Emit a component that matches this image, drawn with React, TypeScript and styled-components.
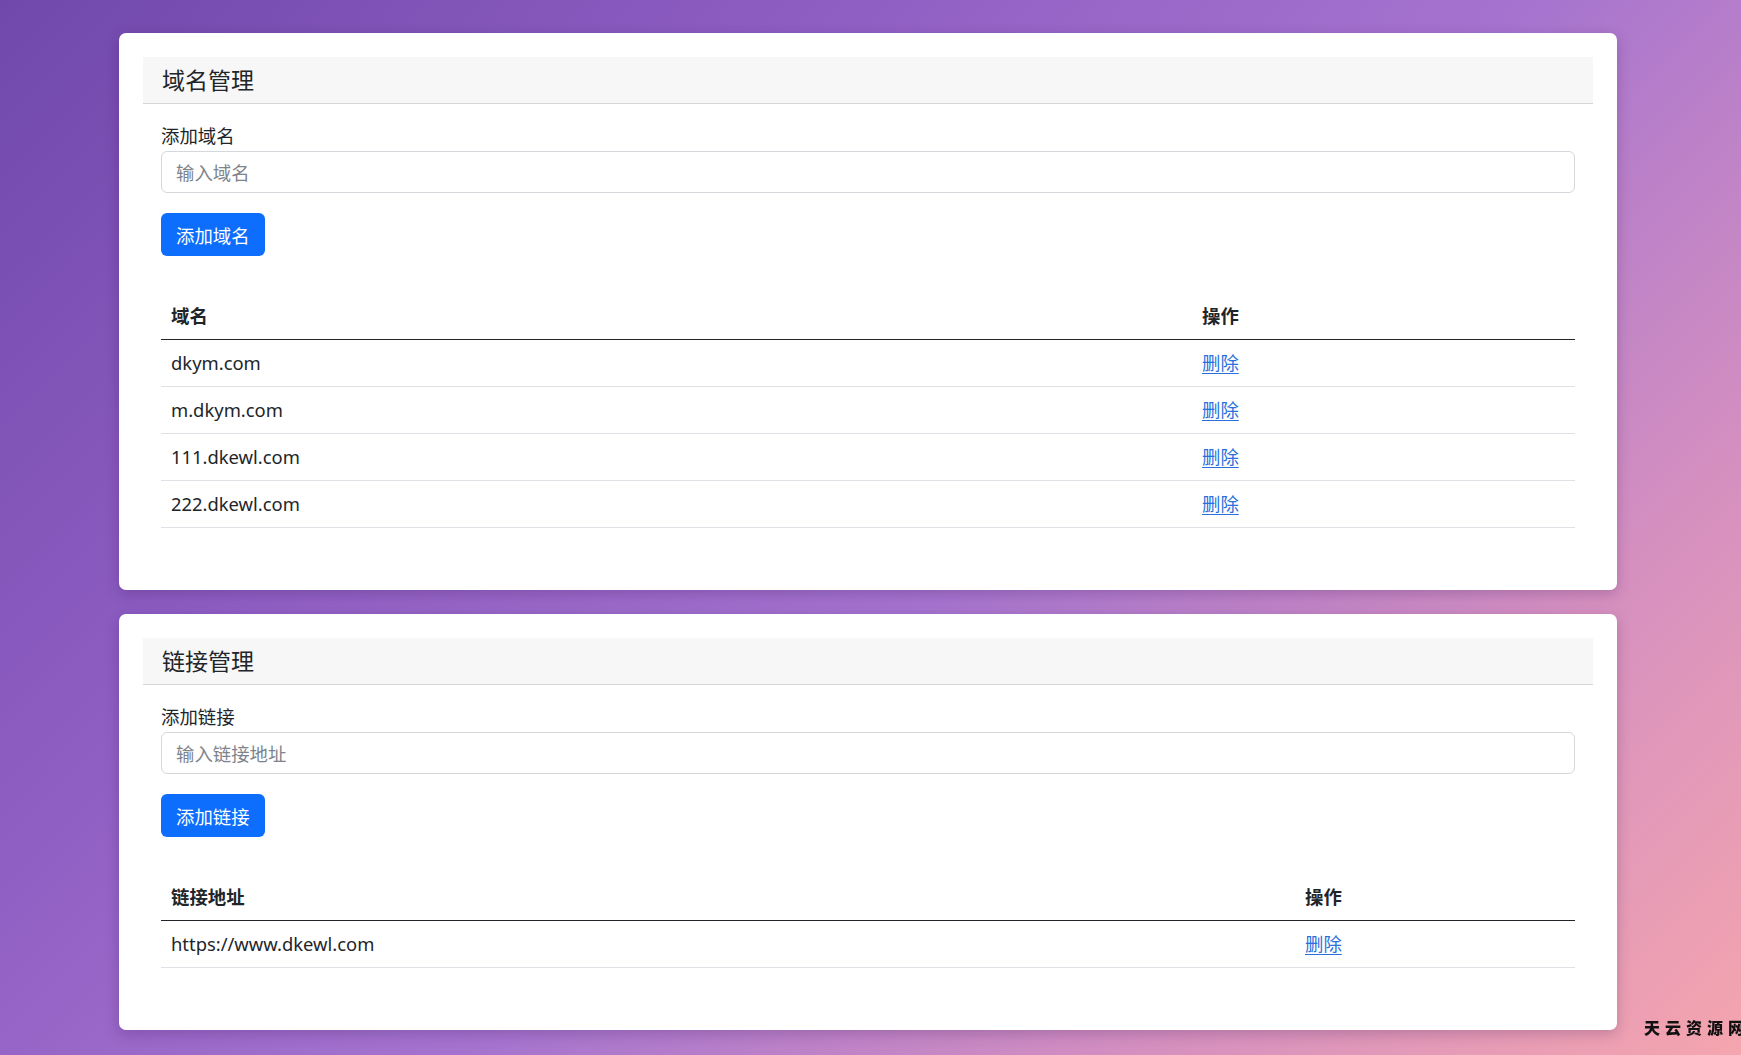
import React from "react";
import styled, { createGlobalStyle } from "styled-components";

const GlobalStyle = createGlobalStyle`
  html, body {
    margin: 0;
    padding: 0;
  }
  body {
    min-height: 100vh;
    font-family: "Noto Sans", "Noto Sans CJK SC", sans-serif;
    font-size: 18.4px;
    color: #212529;
    background: linear-gradient(
      135deg,
      #7048ab 0%,
      #8f5ec3 30%,
      #a674cf 55%,
      #d48fc0 78%,
      #f5a5ae 100%
    );
    background-attachment: fixed;
  }
`;

interface Row {
  value: string;
}

interface SectionProps {
  title: string;
  label: string;
  placeholder: string;
  buttonText: string;
  columnTitle: string;
  actionWidth: number;
  rows: Row[];
}

const domains: Row[] = [
  { value: "dkym.com" },
  { value: "m.dkym.com" },
  { value: "111.dkewl.com" },
  { value: "222.dkewl.com" },
];

const links: Row[] = [{ value: "https://www.dkewl.com" }];

const Section: React.FC<SectionProps> = ({
  title,
  label,
  placeholder,
  buttonText,
  columnTitle,
  actionWidth,
  rows,
}) => (
  <Card>
    <CardHeader>
      <CardTitle>{title}</CardTitle>
    </CardHeader>
    <CardBody>
      <Label>{label}</Label>
      <Input type="text" placeholder={placeholder} />
      <PrimaryButton type="button">{buttonText}</PrimaryButton>
      <Table>
        <thead>
          <tr>
            <Th>{columnTitle}</Th>
            <Th style={{ width: actionWidth }}>操作</Th>
          </tr>
        </thead>
        <tbody>
          {rows.map((row) => (
            <tr key={row.value}>
              <Td>{row.value}</Td>
              <Td>
                <DeleteLink href="#">删除</DeleteLink>
              </Td>
            </tr>
          ))}
        </tbody>
      </Table>
    </CardBody>
  </Card>
);

const App: React.FC = () => (
  <>
    <GlobalStyle />
    <Page>
      <Section
        title="域名管理"
        label="添加域名"
        placeholder="输入域名"
        buttonText="添加域名"
        columnTitle="域名"
        actionWidth={363}
        rows={domains}
      />
      <Section
        title="链接管理"
        label="添加链接"
        placeholder="输入链接地址"
        buttonText="添加链接"
        columnTitle="链接地址"
        actionWidth={260}
        rows={links}
      />
    </Page>
    <Watermark>天云资源网</Watermark>
  </>
);

const Page = styled.div`
  margin: 0 124px 0 119px;
  padding: 33px 0 24px;
  display: flex;
  flex-direction: column;
  gap: 24px;
`;

const Card = styled.div`
  background: #fff;
  border-radius: 7px;
  padding: 24px 24px 25px;
  box-shadow: 0 4px 14px rgba(40, 10, 70, 0.22);
`;

const CardHeader = styled.div`
  background: #f7f7f7;
  border-bottom: 1px solid #d6d6d6;
  padding: 10px 19px 9px;
`;

const CardTitle = styled.h5`
  margin: 0;
  font-size: 23px;
  font-weight: 400;
  line-height: 27px;
  color: #212529;
`;

const CardBody = styled.div`
  display: flex;
  flex-direction: column;
  align-items: flex-start;
  padding: 18px 18px 37px;
`;

const Label = styled.label`
  line-height: 27px;
  margin-bottom: 2px;
`;

const Input = styled.input`
  box-sizing: border-box;
  width: 100%;
  height: 42px;
  padding: 0 14px;
  border: 1px solid #d4d7db;
  border-radius: 6px;
  font-family: inherit;
  font-size: 18.4px;
  color: #212529;
  outline: none;

  &::placeholder {
    color: #7d848b;
  }
`;

const PrimaryButton = styled.button`
  margin-top: 20px;
  height: 43px;
  padding: 0 15px;
  border: none;
  border-radius: 6px;
  background: #0d6efd;
  color: #fff;
  font-family: inherit;
  font-size: 18.4px;
  cursor: pointer;
`;

const Table = styled.table`
  margin-top: 37px;
  width: 100%;
  border-collapse: collapse;
`;

const Th = styled.th`
  text-align: left;
  font-weight: 700;
  padding: 10px 10px;
  line-height: 26px;
  border-bottom: 1px solid #212529;
`;

const Td = styled.td`
  padding: 10px 10px;
  line-height: 26px;
  border-bottom: 1px solid #dee2e6;
`;

const DeleteLink = styled.a`
  color: #2a6fdb;
  text-decoration: underline;
  text-underline-offset: 3px;
`;

const Watermark = styled.div`
  position: fixed;
  right: -8px;
  bottom: 18px;
  font-family: "Noto Sans CJK SC", sans-serif;
  font-size: 16px;
  font-weight: 900;
  letter-spacing: 5px;
  line-height: 20px;
  color: #111;
`;

export default App;
